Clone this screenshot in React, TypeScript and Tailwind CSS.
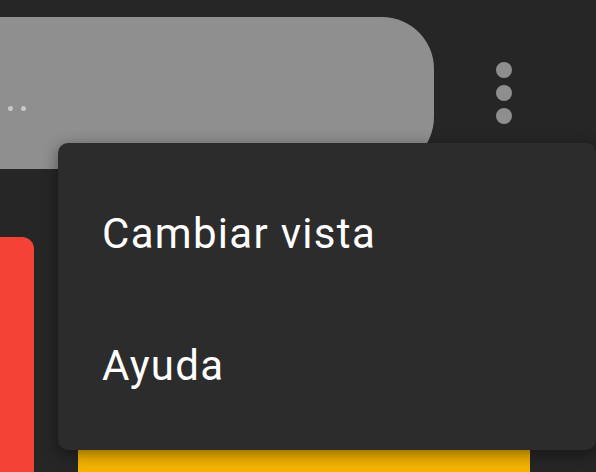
export default function App() {
  return (
    <div
      className="relative w-[596px] h-[472px] overflow-hidden bg-[#262626]"
      style={{ fontFamily: "Roboto, 'Noto Sans', sans-serif" }}
    >
      {/* Top row: gray card + overflow dots */}
      <div className="flex items-start pt-[17px]">
        <div className="relative -ml-[60px] w-[494px] h-[152px] shrink-0 rounded-[52px] bg-[#8f8f8f]">
          <div className="absolute left-[68px] top-[89px] flex gap-[8px]">
            <span className="w-[5px] h-[5px] rounded-full bg-[#c9c9c9]" />
            <span className="w-[5px] h-[5px] rounded-full bg-[#c9c9c9]" />
          </div>
        </div>
        <div className="ml-[62px] mt-[45px] flex flex-col gap-[7px]">
          <span className="w-[16px] h-[16px] rounded-full bg-[#8e8e8e]" />
          <span className="w-[16px] h-[16px] rounded-full bg-[#8e8e8e]" />
          <span className="w-[16px] h-[16px] rounded-full bg-[#8e8e8e]" />
        </div>
      </div>

      {/* Lower row: red and yellow cards */}
      <div className="flex items-start gap-[44px] mt-[68px]">
        <div className="-ml-[20px] w-[54px] h-[300px] rounded-[12px] bg-[#f44336]" />
        <div className="mt-[60px] w-[452px] h-[300px] bg-[#f4b400]" />
      </div>

      {/* Overflow menu */}
      <div className="absolute left-[58px] top-[143px] w-[538px] h-[307px] rounded-[10px] bg-[#2c2c2c] shadow-[0_4px_16px_rgba(0,0,0,0.45)] pt-[25px] pb-[17px] flex flex-col">
        <div className="h-[132px] flex items-center pl-[44px] text-white text-[42px] tracking-[1.3px] leading-none">
          Cambiar vista
        </div>
        <div className="h-[132px] flex items-center pl-[44px] text-white text-[42px] tracking-[1.3px] leading-none">
          Ayuda
        </div>
      </div>
    </div>
  );
}
